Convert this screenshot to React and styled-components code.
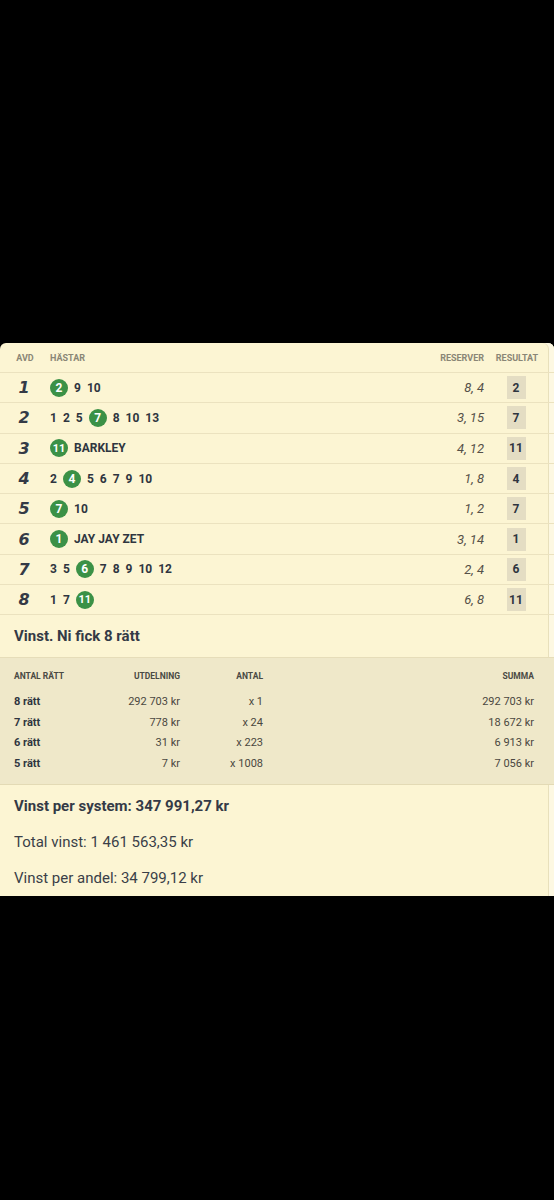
import styled, { createGlobalStyle } from "styled-components";

const Global = createGlobalStyle`
  html, body {
    margin: 0;
    padding: 0;
    background: #000;
  }
  body {
    font-family: Roboto, "Liberation Sans", Arial, sans-serif;
    color: #2f3540;
  }
`;

const Page = styled.div`
  width: 554px;
  height: 1200px;
  background: #000;
  padding-top: 343px;
  box-sizing: border-box;
`;

const Card = styled.div`
  width: 554px;
  background: #fcf5d3;
  border-radius: 6px 6px 0 0;
  box-shadow: inset -5px 0 0 #fdf8e2, inset -6px 0 0 #e8e0bc;
  overflow: hidden;
`;

const Row = styled.div`
  display: grid;
  grid-template-columns: 48px 1fr 90px 64px;
  align-items: center;
  padding-right: 6px;
  height: ${(p) => (p.$head ? "30px" : "30.3px")};
  border-bottom: 1px solid #ebe2bf;
  box-sizing: border-box;
`;

const HeadCell = styled.div`
  font-size: 9px;
  font-weight: 700;
  color: #8a8676;
  text-transform: uppercase;
  text-align: ${(p) => p.$align || "left"};
  padding-left: ${(p) => (p.$first ? "0" : "2px")};
`;

const Avd = styled.div`
  font-family: "DejaVu Sans", "Liberation Sans", sans-serif;
  font-size: 16px;
  font-weight: 700;
  font-style: italic;
  text-align: center;
  color: #343a46;
`;

const Horses = styled.div`
  display: flex;
  align-items: center;
  gap: 6px;
  padding-left: 2px;
  font-size: 12px;
  font-weight: 700;
  color: #2f3540;
`;

const Winner = styled.span`
  width: 18px;
  height: 18px;
  border-radius: 50%;
  background: #3b9146;
  color: #fff;
  display: inline-flex;
  align-items: center;
  justify-content: center;
  font-size: ${(p) => (p.$wide ? "11px" : "12px")};
  font-weight: 700;
`;

const Reserves = styled.div`
  font-size: 13px;
  font-style: italic;
  color: #555048;
  text-align: right;
`;

const ResultCell = styled.div`
  display: flex;
  justify-content: center;
`;

const ResultBox = styled.span`
  min-width: 17px;
  height: 23px;
  padding: 0 1px;
  background: #e4ddc3;
  display: inline-flex;
  align-items: center;
  justify-content: center;
  font-size: 12px;
  font-weight: 700;
  color: #2f3540;
`;

const Title = styled.div`
  height: 43px;
  display: flex;
  align-items: center;
  padding-left: 14px;
  font-size: 15px;
  font-weight: 700;
  color: #343a46;
  border-bottom: 1px solid #e6ddb9;
  box-sizing: border-box;
`;

const Payout = styled.div`
  background: #efe8c9;
  padding: 6px 20px 10px 14px;
  border-bottom: 1px solid #e3dab5;
`;

const PayRow = styled.div`
  display: grid;
  grid-template-columns: 86px 80px 83px 1fr;
  align-items: center;
  height: ${(p) => (p.$head ? "23px" : "20.6px")};
  margin-bottom: ${(p) => (p.$head ? "4px" : "0")};
`;

const PayCell = styled.div`
  font-size: ${(p) => (p.$head ? "8.5px" : "11px")};
  font-weight: ${(p) => (p.$head || p.$bold ? 700 : 400)};
  text-transform: ${(p) => (p.$head ? "uppercase" : "none")};
  color: ${(p) => (p.$head ? "#4a4a44" : p.$bold ? "#2f3540" : "#4a4740")};
  text-align: ${(p) => (p.$right ? "right" : "left")};
`;

const Summary = styled.div`
  padding: 3px 14px 0;
  display: flex;
  flex-direction: column;
`;

const SumLine = styled.div`
  height: 36px;
  display: flex;
  align-items: center;
  font-size: 15px;
  font-weight: ${(p) => (p.$bold ? 700 : 400)};
  color: ${(p) => (p.$bold ? "#343a46" : "#3a3f48")};
`;

const races = [
  { avd: 1, horses: [2, 9, 10], win: 2, res: "8, 4" },
  { avd: 2, horses: [1, 2, 5, 7, 8, 10, 13], win: 7, res: "3, 15" },
  { avd: 3, horses: [11], win: 11, name: "BARKLEY", res: "4, 12" },
  { avd: 4, horses: [2, 4, 5, 6, 7, 9, 10], win: 4, res: "1, 8" },
  { avd: 5, horses: [7, 10], win: 7, res: "1, 2" },
  { avd: 6, horses: [1], win: 1, name: "JAY JAY ZET", res: "3, 14" },
  { avd: 7, horses: [3, 5, 6, 7, 8, 9, 10, 12], win: 6, res: "2, 4" },
  { avd: 8, horses: [1, 7, 11], win: 11, res: "6, 8" },
];

const payouts = [
  ["8 rätt", "292 703 kr", "x 1", "292 703 kr"],
  ["7 rätt", "778 kr", "x 24", "18 672 kr"],
  ["6 rätt", "31 kr", "x 223", "6 913 kr"],
  ["5 rätt", "7 kr", "x 1008", "7 056 kr"],
];

export default function App() {
  return (
    <Page>
      <Global />
      <Card>
        <Row $head>
          <HeadCell $align="center">Avd</HeadCell>
          <HeadCell>Hästar</HeadCell>
          <HeadCell $align="right">Reserver</HeadCell>
          <HeadCell $align="center">Resultat</HeadCell>
        </Row>
        {races.map((r) => (
          <Row key={r.avd}>
            <Avd>{r.avd}</Avd>
            <Horses>
              {r.horses.map((h) =>
                h === r.win ? (
                  <Winner key={h} $wide={h > 9}>
                    {h}
                  </Winner>
                ) : (
                  <span key={h}>{h}</span>
                )
              )}
              {r.name && <span>{r.name}</span>}
            </Horses>
            <Reserves>{r.res}</Reserves>
            <ResultCell>
              <ResultBox>{r.win}</ResultBox>
            </ResultCell>
          </Row>
        ))}
        <Title>Vinst. Ni fick 8 rätt</Title>
        <Payout>
          <PayRow $head>
            <PayCell $head>Antal rätt</PayCell>
            <PayCell $head $right>Utdelning</PayCell>
            <PayCell $head $right>Antal</PayCell>
            <PayCell $head $right>Summa</PayCell>
          </PayRow>
          {payouts.map((p) => (
            <PayRow key={p[0]}>
              <PayCell $bold>{p[0]}</PayCell>
              <PayCell $right>{p[1]}</PayCell>
              <PayCell $right>{p[2]}</PayCell>
              <PayCell $right>{p[3]}</PayCell>
            </PayRow>
          ))}
        </Payout>
        <Summary>
          <SumLine $bold>Vinst per system: 347 991,27 kr</SumLine>
          <SumLine>Total vinst: 1 461 563,35 kr</SumLine>
          <SumLine>Vinst per andel: 34 799,12 kr</SumLine>
        </Summary>
      </Card>
    </Page>
  );
}
